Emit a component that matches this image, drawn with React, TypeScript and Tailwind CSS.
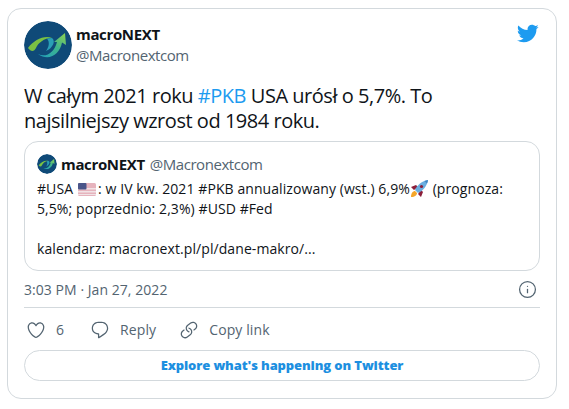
import { Info } from "lucide-react";

const font = { fontFamily: '"Open Sans", "Noto Sans", sans-serif' };

function Logo({ size, id }: { size: number; id: string }) {
    return (
        <svg width={size} height={size} viewBox="0 0 48 48" className="shrink-0 rounded-full">
            <defs>
                <linearGradient id={id} x1="0" y1="1" x2="1" y2="0">
                    <stop offset="0" stopColor="#1f9fc0" />
                    <stop offset="0.55" stopColor="#3fb58a" />
                    <stop offset="1" stopColor="#8fd14f" />
                </linearGradient>
            </defs>
            <circle cx="24" cy="24" r="24" fill="#0f4a78" />
            <path d="M4 27 C10 19 20 14 28 17 C20 17 14 22 12 27 C10 31 7 31 4 27Z" fill="#7ac143" />
            <path d="M28 17 C32 20 29 27 22 30 C25 26 26 21 23 17.5Z" fill="#2a9fb5" />
            <path d="M14 33 C22 37 30 32 33 21 L30 21 L41 12 L42 24 L38 21.5 C36 33 25 41 14 33Z" fill={`url(#${id})`} />
        </svg>
    );
}

function Bird() {
    return (
        <svg viewBox="0 0 24 24" width="23" height="23" fill="#1d9bf0" className="mr-[1px] mt-[1px]">
            <path d="M23.643 4.937c-.835.37-1.732.62-2.675.733.962-.576 1.7-1.49 2.048-2.578-.9.534-1.897.922-2.958 1.13-.85-.904-2.06-1.47-3.4-1.47-2.572 0-4.658 2.086-4.658 4.66 0 .364.042.718.12 1.06-3.873-.195-7.304-2.05-9.602-4.868-.4.69-.63 1.49-.63 2.342 0 1.616.823 3.043 2.072 3.878-.764-.025-1.482-.234-2.11-.583v.06c0 2.257 1.605 4.14 3.737 4.568-.392.106-.803.162-1.227.162-.3 0-.593-.028-.877-.082.593 1.85 2.313 3.198 4.352 3.234-1.595 1.25-3.604 1.995-5.786 1.995-.376 0-.747-.022-1.112-.065 2.062 1.323 4.51 2.093 7.14 2.093 8.57 0 13.255-7.098 13.255-13.254 0-.2-.005-.402-.014-.602.91-.658 1.7-1.477 2.323-2.41z" />
        </svg>
    );
}

function HeartIcon() {
    return (
        <svg viewBox="0 0 24 24" width="20" height="20" fill="#536471" className="shrink-0">
            <path d="M12 21.638h-.014C9.403 21.59 1.95 14.856 1.95 8.478c0-3.064 2.525-5.754 5.403-5.754 2.29 0 3.83 1.58 4.646 2.73.814-1.148 2.354-2.73 4.645-2.73 2.88 0 5.404 2.69 5.404 5.755 0 6.376-7.454 13.11-10.037 13.157H12zM7.354 4.225c-2.08 0-3.903 1.988-3.903 4.255 0 5.74 7.034 11.596 8.55 11.658 1.518-.062 8.55-5.917 8.55-11.658 0-2.267-1.823-4.255-3.903-4.255-2.528 0-3.94 2.936-3.952 2.965-.23.562-1.156.562-1.387 0-.014-.03-1.425-2.965-3.954-2.965z" />
        </svg>
    );
}

function ReplyIcon() {
    return (
        <svg viewBox="0 0 24 24" width="20" height="20" fill="#536471" className="shrink-0">
            <path d="M14.046 2.242l-4.148-.01h-.002c-4.374 0-7.8 3.427-7.8 7.802 0 4.098 3.186 7.206 7.465 7.37v3.828c0 .108.044.286.12.403.142.225.384.347.632.347.138 0 .277-.038.402-.118.264-.168 6.473-4.14 8.088-5.506 1.902-1.61 3.04-3.97 3.043-6.312v-.017c-.006-4.367-3.43-7.787-7.8-7.788zm3.787 12.972c-1.134.96-4.862 3.405-6.772 4.643V16.67c0-.414-.335-.75-.75-.75h-.396c-3.66 0-6.318-2.476-6.318-5.886 0-3.534 2.768-6.302 6.3-6.302l4.147.01h.002c3.532 0 6.3 2.766 6.302 6.296-.003 1.91-.942 3.844-2.514 5.176z" />
        </svg>
    );
}

function LinkIcon() {
    return (
        <svg viewBox="0 0 24 24" width="20" height="20" fill="#536471" className="shrink-0">
            <path d="M11.96 14.945c-.067 0-.136-.01-.203-.027-1.13-.318-2.097-.986-2.795-1.932-.832-1.125-1.176-2.508-.968-3.893s.942-2.605 2.068-3.438l3.53-2.608c2.322-1.716 5.61-1.224 7.33 1.1.83 1.127 1.175 2.51.967 3.895s-.943 2.605-2.07 3.438l-1.48 1.094c-.333.246-.804.175-1.05-.158-.246-.334-.176-.804.158-1.05l1.48-1.095c.803-.592 1.327-1.463 1.476-2.45.148-.988-.098-1.975-.69-2.778-1.225-1.656-3.572-2.01-5.23-.784l-3.53 2.608c-.802.593-1.326 1.464-1.475 2.45-.15.99.097 1.975.69 2.778.498.675 1.187 1.15 1.992 1.377.4.114.633.528.52.928-.092.33-.394.547-.722.547z" />
            <path d="M7.27 22.054c-1.61 0-3.197-.735-4.225-2.125-.832-1.127-1.176-2.51-.968-3.894s.943-2.605 2.07-3.438l1.478-1.094c.334-.245.805-.175 1.05.158s.177.804-.157 1.05l-1.48 1.095c-.803.593-1.326 1.464-1.475 2.45-.148.99.097 1.975.69 2.778 1.225 1.657 3.57 2.01 5.23.785l3.528-2.608c1.658-1.225 2.01-3.57.785-5.23-.498-.674-1.187-1.15-1.992-1.376-.4-.113-.633-.527-.52-.927.112-.4.528-.63.926-.522 1.13.318 2.096.986 2.794 1.932 1.717 2.324 1.224 5.612-1.1 7.33l-3.53 2.608c-.933.693-2.023 1.026-3.105 1.026z" />
        </svg>
    );
}

function Flag() {
    return (
        <svg width="18" height="13" viewBox="0 0 18 13" className="ml-[5px] mr-[2px] inline-block align-[-2px]">
            <rect width="18" height="13" rx="1.5" fill="#e6b3bd" />
            <rect y="5" width="18" height="1.5" fill="#f1e3e6" />
            <rect y="8" width="18" height="1.5" fill="#f1e3e6" />
            <rect y="11" width="18" height="1" fill="#f1e3e6" />
            <rect width="8.5" height="6.5" rx="1" fill="#4a5589" />
        </svg>
    );
}

function Rocket() {
    return (
        <svg width="19" height="19" viewBox="0 0 19 19" className="inline-block align-[-4px]">
            <path d="M1 18 C1 14 3 12 5 12 L7 14 C7 16 5 18 1 18Z" fill="#f4a62a" />
            <path d="M1 8 L6 6 L8 8 L4 11Z M11 18 L13 13 L11 11 L8 15Z" fill="#8c1f3a" />
            <path d="M5 11 C7 6 12 2 18 1 C17 7 13 12 8 14Z" fill="#6aaee0" />
            <path d="M18 1 C17.8 2.5 17.4 3.6 17 4.6 L14.4 2 C15.5 1.5 16.7 1.2 18 1Z" fill="#3f86c4" />
            <circle cx="11.5" cy="7.5" r="1.6" fill="#8c1f3a" />
        </svg>
    );
}

export default function App() {
    return (
        <div className="h-[409px] w-[569px] overflow-hidden bg-white pl-[7px] pt-[8px] text-[#0f1419]" style={font}>
            <div className="h-[391px] w-[550px] rounded-[14px] border border-[#d3d9dd] px-4 pt-3">
                <div className="flex items-start justify-between">
                    <div className="flex items-center gap-1">
                        <Logo size={48} id="logo-big" />
                        <div className="leading-[21px]">
                            <div className="text-[15px] font-bold tracking-[-0.35px]">macroNEXT</div>
                            <div className="text-[15px] tracking-[-0.45px] text-[#536471]">@Macronextcom</div>
                        </div>
                    </div>
                    <Bird />
                </div>
                <p className="mt-[14px] text-[20px] leading-[25px] tracking-[-0.47px]">
                    W całym 2021 roku <span className="text-[#1d9bf0]">#PKB</span> USA urósł o 5,7%. To
                    <br />
                    najsilniejszy wzrost od 1984 roku.
                </p>
                <div className="mt-[8px] h-[130px] rounded-[14px] border border-[#d3d9dd] px-3 pt-3">
                    <div className="flex items-center gap-1 text-[15px] leading-[20px]">
                        <Logo size={20} id="logo-small" />
                        <span className="font-bold tracking-[-0.35px]">macroNEXT</span>
                        <span className="ml-[1px] tracking-[-0.45px] text-[#536471]">@Macronextcom</span>
                    </div>
                    <p className="mt-[5px] text-[14px] leading-[20px] tracking-[0.08px]">
                        #USA
                        <Flag />
                        : w IV kw. 2021 #PKB annualizowany (wst.) 6,9%
                        <Rocket />
                        {"  "}(prognoza:
                        <br />
                        5,5%; poprzednio: 2,3%) #USD #Fed
                        <br />
                        <br />
                        kalendarz: macronext.pl/pl/dane-makro/...
                    </p>
                </div>
                <div className="flex h-[37px] items-center justify-between border-b border-[#d3d9dd] text-[14px] tracking-[0.05px] text-[#536471]">
                    <span>3:03 PM · Jan 27, 2022</span>
                    <Info className="mr-[3px] h-[19px] w-[19px] text-[#536471]" strokeWidth={1.6} />
                </div>
                <div className="flex h-[42px] items-center pl-[2px] pt-[1px] text-[14px] tracking-[0.1px] text-[#536471]">
                    <HeartIcon />
                    <span className="ml-[10px]">6</span>
                    <span className="ml-[26px]"><ReplyIcon /></span>
                    <span className="ml-[10px]">Reply</span>
                    <span className="ml-[23px]"><LinkIcon /></span>
                    <span className="ml-[10px]">Copy link</span>
                </div>
                <div className="flex h-[31px] items-center justify-center rounded-full border border-[#d3d9dd] pt-[1px] text-[13px] font-extrabold tracking-[-0.12px] text-[#1d8fe0]">
                    Explore what's happening on Twitter
                </div>
            </div>
        </div>
    );
}
